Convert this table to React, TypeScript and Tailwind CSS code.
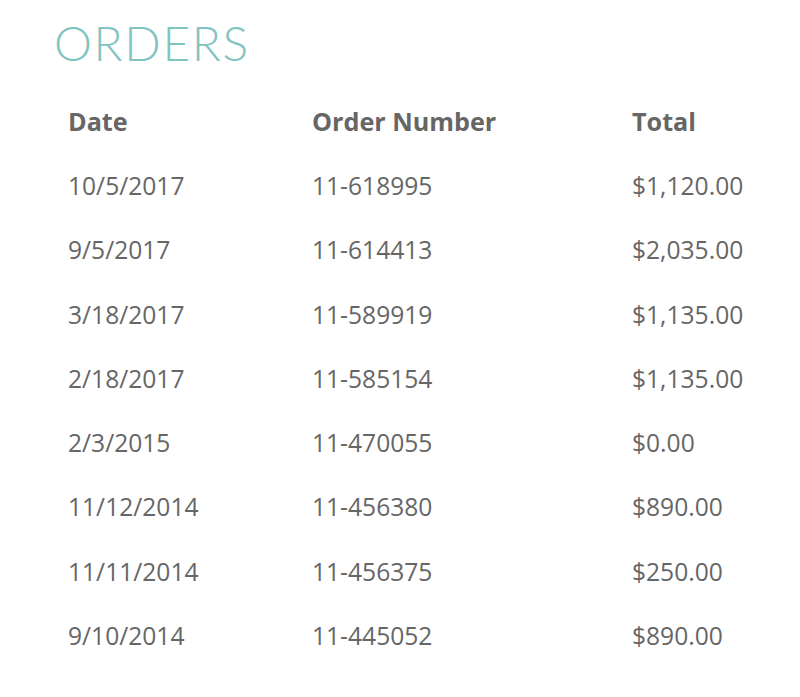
import React from 'react';

const orders = [
	{ date: '10/5/2017', number: '11-618995', total: '$1,120.00' },
	{ date: '9/5/2017', number: '11-614413', total: '$2,035.00' },
	{ date: '3/18/2017', number: '11-589919', total: '$1,135.00' },
	{ date: '2/18/2017', number: '11-585154', total: '$1,135.00' },
	{ date: '2/3/2015', number: '11-470055', total: '$0.00' },
	{ date: '11/12/2014', number: '11-456380', total: '$890.00' },
	{ date: '11/11/2014', number: '11-456375', total: '$250.00' },
	{ date: '9/10/2014', number: '11-445052', total: '$890.00' },
];

export default function App() {
	return (
		<div className="w-[800px] h-[697px] bg-white overflow-hidden">
			{/* Heading */}
			<h1 className="pl-[54px] pt-[16px] h-[90px] text-[48px] leading-[54px] font-light tracking-[1.6px] text-[#80c4c0] font-['Lato',sans-serif]">
				ORDERS
			</h1>

			{/* Orders table */}
			<div className="pl-[68px] font-['Open_Sans',sans-serif] text-[24.6px] text-[#666666]">
				<div className="grid grid-cols-[244px_320px_1fr] h-[64.3px] items-center font-bold text-[25.2px]">
					<span>Date</span>
					<span>Order Number</span>
					<span>Total</span>
				</div>
				{orders.map((o) => (
					<div key={o.number} className="grid grid-cols-[244px_320px_1fr] h-[64.3px] items-center">
						<span>{o.date}</span>
						<span>{o.number}</span>
						<span>{o.total}</span>
					</div>
				))}
			</div>
		</div>
	);
}
